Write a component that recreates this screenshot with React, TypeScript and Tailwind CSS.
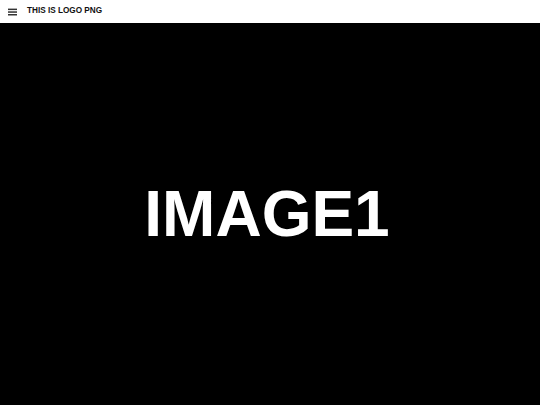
export default function App() {
  return (
    <div className="flex h-[405px] w-full flex-col bg-black font-['Liberation_Sans',Arial,sans-serif]">
      <header className="flex h-[23px] shrink-0 items-center gap-[10px] bg-white pl-[8px]">
        <svg width="9" height="8" viewBox="0 0 9 8" className="text-[#333]">
          <rect x="0" y="0.6" width="9" height="1.5" fill="currentColor" />
          <rect x="0" y="3.3" width="9" height="1.5" fill="currentColor" />
          <rect x="0" y="6" width="9" height="1.5" fill="currentColor" />
        </svg>
        <span className="text-[8.2px] font-bold leading-none text-[#111]">
          THIS IS LOGO PNG
        </span>
      </header>
      <main className="flex flex-1 items-center justify-center">
        <h1 className="mr-[6px] text-[64px] font-bold leading-none text-white">IMAGE1</h1>
      </main>
    </div>
  );
}
